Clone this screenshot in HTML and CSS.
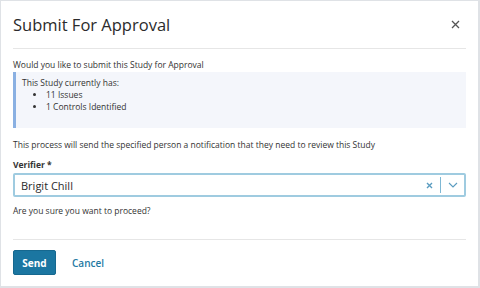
FILE: index.html
```html
<!DOCTYPE html>
<html lang="en">
<head>
    <meta charset="UTF-8">
    <meta name="viewport" content="width=device-width, initial-scale=1.0">
    <title>Submit For Approval</title>
    <link rel="stylesheet" href="styles.css">
</head>
<body>
    <div class="dialog">
        <div class="dialog-header">
            <h1>Submit For Approval</h1>
            <button class="close-btn" aria-label="Close">
                <svg width="9" height="9" viewBox="0 0 9 9"><path d="M1 1L8 8M8 1L1 8" stroke="#555" stroke-width="1.3"/></svg>
            </button>
        </div>

        <div class="dialog-body">
            <p class="intro">Would you like to submit this Study for Approval</p>
            <div class="info-box">
                <p>This Study currently has:</p>
                <ul>
                    <li>11 Issues</li>
                    <li>1 Controls Identified</li>
                </ul>
            </div>
            <p class="notice">This process will send the specified person a notification that they need to review this Study</p>

            <label class="field-label">Verifier *</label>
            <div class="select">
                <span class="select-value">Brigit Chill</span>
                <span class="select-clear">
                    <svg width="7" height="7" viewBox="0 0 7 7"><path d="M1 1L6 6M6 1L1 6" stroke="#5a9cc0" stroke-width="1.4"/></svg>
                </span>
                <span class="select-sep"></span>
                <span class="select-arrow">
                    <svg width="10" height="6" viewBox="0 0 10 6"><path d="M1 1L5 5L9 1" fill="none" stroke="#5a9cc0" stroke-width="1.1"/></svg>
                </span>
            </div>

            <p class="confirm">Are you sure you want to proceed?</p>
        </div>

        <div class="dialog-footer">
            <button class="btn-send">Send</button>
            <button class="btn-cancel">Cancel</button>
        </div>
    </div>
</body>
</html>
```

FILE: styles.css
```css
body {
    margin: 0;
    background-color: #dfe2e6;
    font-family: "Open Sans", "DejaVu Sans", sans-serif;
    color: #333;
}

.dialog {
    background-color: #fff;
    margin: 1px 2px 2px 1px;
    height: 285px;
    box-sizing: border-box;
    padding: 0 12px;
}

.dialog-header {
    display: flex;
    justify-content: space-between;
    align-items: center;
    height: 47px;
    border-bottom: 1px solid #e6e6e6;
}

h1 {
    margin: 0;
    font-size: 16.5px;
    font-weight: 400;
    color: #2b2b2b;
}

.close-btn {
    background: none;
    border: none;
    padding: 0;
    margin-right: 6px;
    display: flex;
    cursor: pointer;
}

.dialog-body {
    font-size: 8.5px;
    padding-top: 10px;
    height: 191px;
    box-sizing: border-box;
    border-bottom: 1px solid #e6e6e6;
}

p {
    margin: 0;
}

.intro {
    line-height: 12px;
}

.info-box {
    margin-top: 1px;
    background-color: #f4f6fb;
    border-left: 3px solid #8ab0e2;
    height: 56px;
    box-sizing: border-box;
    padding: 5px 0 0 6px;
    line-height: 12px;
}

.info-box ul {
    margin: 0;
    padding-left: 24px;
}

.notice {
    margin-top: 11px;
    line-height: 12px;
}

.field-label {
    display: block;
    margin-top: 8px;
    font-weight: 700;
    line-height: 12px;
}

.select {
    margin-top: 2px;
    height: 24px;
    box-sizing: border-box;
    border: 2px solid #9fcbe0;
    border-radius: 2px;
    display: flex;
    align-items: center;
    padding: 0 6px;
}

.select-value {
    flex: 1;
    font-size: 11px;
    color: #2b2b2b;
}

.select-clear {
    display: flex;
    margin-right: 7px;
}

.select-sep {
    width: 1px;
    height: 16px;
    background-color: #7fb8d4;
    margin-right: 7px;
}

.select-arrow {
    display: flex;
}

.confirm {
    margin-top: 8px;
    line-height: 12px;
}

.dialog-footer {
    display: flex;
    align-items: center;
    padding-top: 10px;
    gap: 16px;
}

.btn-send {
    background-color: #1b76a1;
    color: #fff;
    border: 1px solid #16688f;
    border-radius: 2px;
    font-family: inherit;
    font-weight: 700;
    font-size: 10px;
    width: 43px;
    height: 25px;
    cursor: pointer;
}

.btn-cancel {
    background: none;
    border: none;
    padding: 0;
    color: #1f7aa3;
    font-family: inherit;
    font-weight: 600;
    font-size: 10px;
    cursor: pointer;
}
```
